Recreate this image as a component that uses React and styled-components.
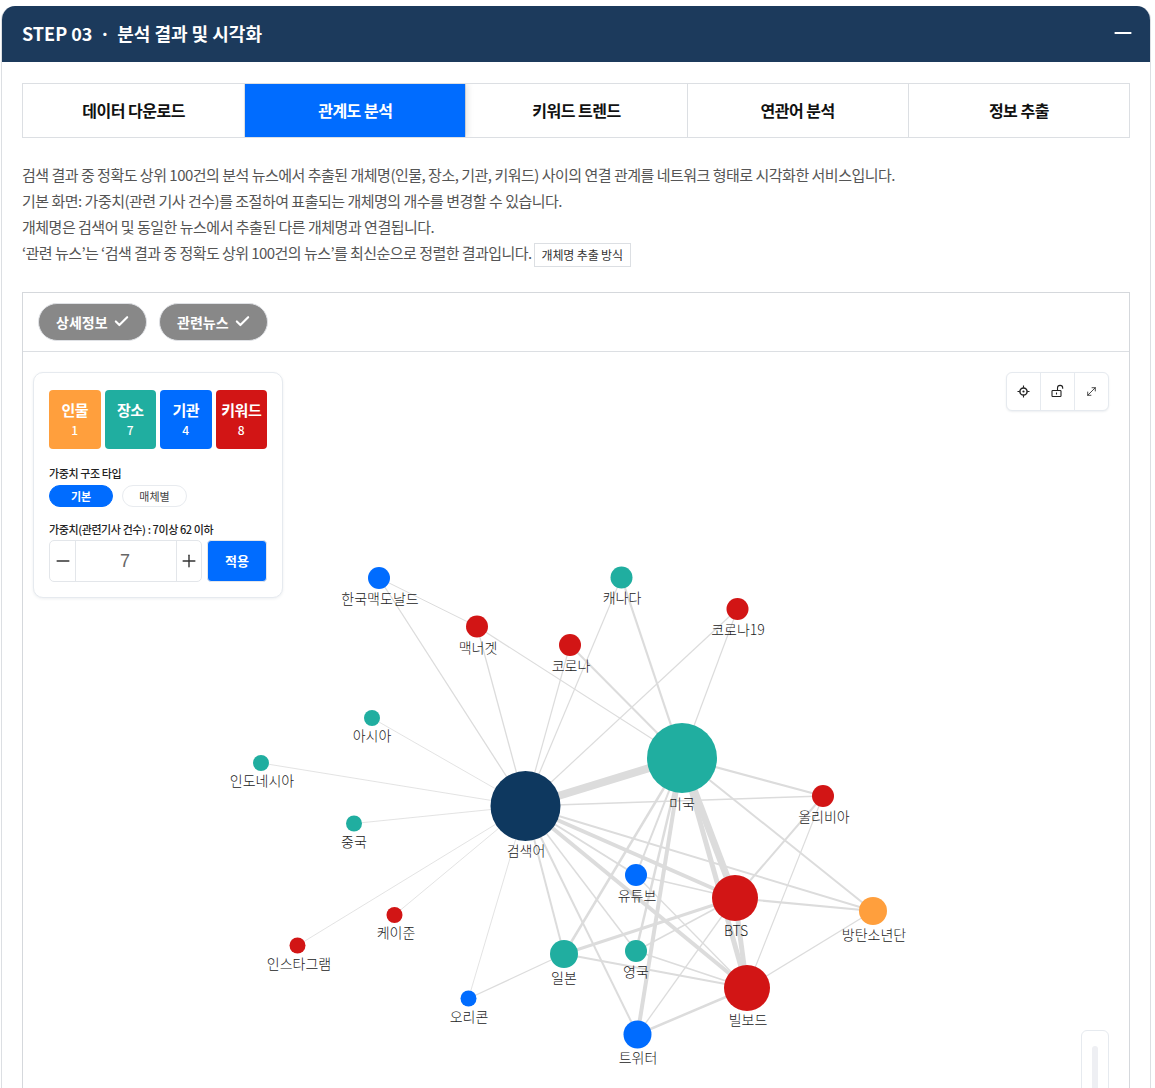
import React from "react";
import styled, { createGlobalStyle } from "styled-components";
import { Check, Minus, MoveDiagonal, Plus } from "lucide-react";

const GlobalStyle = createGlobalStyle`
  html, body, #root {
    margin: 0;
    height: 1088px;
    overflow: hidden;
    background: #fff;
  }
  * { box-sizing: border-box; }
  body {
    font-family: "Noto Sans CJK KR", "Noto Sans", sans-serif;
    color: #333;
  }
`;

const COLORS = {
  person: "#ff9f3d",
  place: "#20aea0",
  org: "#006cff",
  keyword: "#d21515",
  root: "#0e385f",
};

const Section = styled.section`
  margin: 6px 4px 0 1px;
  height: 1082px;
  overflow: hidden;
  border: 1px solid #dcdfe3;
  border-top: none;
  border-bottom: none;
  border-radius: 14px 14px 0 0;
`;

const Header = styled.header`
  display: flex;
  align-items: center;
  justify-content: space-between;
  height: 56px;
  padding: 0 14px 2px 20px;
  background: #1c3a5c;
  color: #fff;
`;

const HeaderTitle = styled.h2`
  margin: 0;
  font-size: 18px;
  font-weight: 700;
`;

const Body = styled.div`
  padding: 21px 20px 0;
`;

const Tabs = styled.nav`
  display: grid;
  grid-template-columns: repeat(5, 1fr);
  height: 55px;
  border: 1px solid #dcdfe3;
  overflow: hidden;
`;

const Tab = styled.button`
  position: relative;
  z-index: ${(p) => (p.$active ? 1 : 0)};
  padding: 0 0 2px;
  border: none;
  border-left: 1px solid #dcdfe3;
  background: ${(p) => (p.$active ? "#006cff" : "#fff")};
  box-shadow: ${(p) => (p.$active ? "3px 0 6px rgba(0, 0, 0, 0.1)" : "none")};
  color: ${(p) => (p.$active ? "#fff" : "#111")};
  font: 700 16px "Noto Sans CJK KR", sans-serif;
  letter-spacing: -0.5px;
  &:first-child { border-left: none; }
`;

const Guide = styled.div`
  margin-top: 24px;
  font-size: 15px;
  line-height: 26px;
  color: #555;
  letter-spacing: -0.5px;
`;

const GuideLine = styled.p`
  margin: 0;
  letter-spacing: ${(p) => (p.$tight ? "-0.55px" : "inherit")};
`;

const MethodButton = styled.button`
  height: 24px;
  margin-left: 2px;
  padding: 0 7px;
  border: 1px solid #dcdfe3;
  background: #fff;
  color: #333;
  font: 400 12px "Noto Sans CJK KR", sans-serif;
  letter-spacing: -0.15px;
  vertical-align: middle;
`;

const Viewer = styled.div`
  margin-top: 25px;
  border: 1px solid #d5d8dc;
  border-bottom: none;
`;

const FilterBar = styled.div`
  display: flex;
  gap: 12px;
  height: 59px;
  padding: 10px 15px 0;
  border-bottom: 1px solid #dcdfe3;
`;

const FilterPill = styled.button`
  display: inline-flex;
  align-items: center;
  gap: 5px;
  width: 109px;
  height: 38px;
  padding: 0 0 0 17px;
  border: 1px solid #dfe1e5;
  border-radius: 19px;
  background: #888;
  color: #fff;
  font: 700 14px "Noto Sans CJK KR", sans-serif;
  white-space: nowrap;
`;

const Canvas = styled.div`
  position: relative;
  height: 736px;
`;

const Graph = styled.svg`
  display: block;
`;

const NodeLabel = styled.text`
  font-family: "Noto Sans CJK KR", sans-serif;
  font-size: 14px;
  font-weight: 300;
  fill: #222;
  text-anchor: middle;
`;

const ControlCard = styled.div`
  position: absolute;
  left: 10px;
  top: 20px;
  width: 250px;
  height: 226px;
  padding: 17px 15px 0;
  background: #fff;
  border: 1px solid #e6eaef;
  border-radius: 10px;
  box-shadow: 0 1px 3px rgba(30, 50, 80, 0.08);
`;

const Legend = styled.div`
  display: grid;
  grid-template-columns: repeat(4, 1fr);
  gap: 4px;
  width: 218px;
`;

const LegendTile = styled.div`
  display: flex;
  flex-direction: column;
  align-items: center;
  justify-content: center;
  height: 59px;
  padding-bottom: 1px;
  border-radius: 4px;
  background: ${(p) => p.$color};
  color: #fff;
`;

const LegendName = styled.span`
  font-size: 15px;
  font-weight: 700;
  line-height: 20px;
  letter-spacing: -0.5px;
  white-space: nowrap;
`;

const LegendCount = styled.span`
  margin-top: 2px;
  font-size: 12px;
  font-weight: 500;
  line-height: 16px;
`;

const FieldLabel = styled.div`
  margin-top: ${(p) => p.$top}px;
  font-size: 11px;
  font-weight: 500;
  line-height: 16px;
  letter-spacing: -0.4px;
  color: #222;
`;

const TypeRow = styled.div`
  display: flex;
  gap: 9px;
  margin-top: 4px;
`;

const TypeButton = styled.button`
  width: ${(p) => p.$width}px;
  height: 22px;
  padding: 0;
  border-radius: 11px;
  border: 1px solid ${(p) => (p.$active ? "#006cff" : "#e8ebef")};
  background: ${(p) => (p.$active ? "#006cff" : "#fff")};
  color: ${(p) => (p.$active ? "#fff" : "#444")};
  font: ${(p) => (p.$active ? 700 : 400)} 11px "Noto Sans CJK KR", sans-serif;
`;

const WeightRow = styled.div`
  display: flex;
  gap: 5px;
  margin-top: 3px;
`;

const Stepper = styled.div`
  display: grid;
  grid-template-columns: 25px 1fr 24px;
  width: 153px;
  height: 42px;
  border: 1px solid #e3e6ea;
  border-radius: 5px;
`;

const StepButton = styled.button`
  display: flex;
  align-items: center;
  justify-content: center;
  padding: 0;
  border: none;
  background: transparent;
  color: #333;
`;

const StepValue = styled.div`
  display: flex;
  align-items: center;
  justify-content: center;
  padding: 2px 2px 0 0;
  border-left: 1px solid #e3e6ea;
  border-right: 1px solid #e3e6ea;
  font-family: "Liberation Sans", sans-serif;
  font-size: 18px;
  color: #666;
`;

const ApplyButton = styled.button`
  width: 60px;
  height: 42px;
  border: 1px solid #e3e6ea;
  border-radius: 4px;
  background: #006cff;
  color: #fff;
  font: 700 13px "Noto Sans CJK KR", sans-serif;
`;

const ToolBox = styled.div`
  position: absolute;
  top: 20px;
  right: 20px;
  display: flex;
  height: 39px;
  background: #fff;
  border: 1px solid #e6eaef;
  border-radius: 6px;
  box-shadow: 0 1px 2px rgba(30, 50, 80, 0.08);
`;

const ToolButton = styled.button`
  display: flex;
  align-items: center;
  justify-content: center;
  width: 34px;
  padding: 0;
  border: none;
  border-left: 1px solid #e6eaef;
  background: transparent;
  color: #222;
  &:first-child { border-left: none; width: 33px; }
`;

const ZoomRail = styled.div`
  position: absolute;
  top: 678px;
  right: 20px;
  width: 28px;
  height: 120px;
  padding-top: 15px;
  border: 1px solid #e6eaef;
  border-radius: 6px;
`;

const ZoomTrack = styled.div`
  width: 6px;
  height: 100px;
  margin: 0 auto;
  border-radius: 3px;
  background: #eeeff3;
`;

const NODES = {
  root: { x: 525.5, y: 806, r: 35, c: "root", label: "검색어", lx: 526, ly: 850 },
  usa: { x: 682, y: 758, r: 35, c: "place", label: "미국", lx: 682, ly: 803 },
  bts: { x: 735, y: 898, r: 23, c: "keyword", label: "BTS", lx: 736, ly: 930 },
  billboard: { x: 747, y: 988, r: 23, c: "keyword", label: "빌보드", lx: 748, ly: 1019 },
  twitter: { x: 637.5, y: 1034.5, r: 14, c: "org", label: "트위터", lx: 638, ly: 1057 },
  uk: { x: 636, y: 951, r: 11, c: "place", label: "영국", lx: 636, ly: 971 },
  japan: { x: 564, y: 954, r: 14, c: "place", label: "일본", lx: 564, ly: 977 },
  youtube: { x: 636, y: 875, r: 11, c: "org", label: "유튜브", lx: 637, ly: 895 },
  olympic: { x: 823, y: 796, r: 11, c: "keyword", label: "올리비아", lx: 824, ly: 816 },
  bangtan: { x: 873, y: 911, r: 14, c: "person", label: "방탄소년단", lx: 874, ly: 934 },
  mcd: { x: 379, y: 578, r: 11, c: "org", label: "한국맥도날드", lx: 380, ly: 598 },
  canada: { x: 621.5, y: 577.5, r: 11, c: "place", label: "캐나다", lx: 622, ly: 597 },
  covid19: { x: 737.5, y: 609, r: 11, c: "keyword", label: "코로나19", lx: 738, ly: 629 },
  nugget: { x: 477, y: 626.5, r: 11, c: "keyword", label: "맥너겟", lx: 478, ly: 647 },
  covid: { x: 570, y: 645, r: 11, c: "keyword", label: "코로나", lx: 571, ly: 665 },
  asia: { x: 372, y: 718, r: 8, c: "place", label: "아시아", lx: 372, ly: 735 },
  indonesia: { x: 261, y: 763, r: 8, c: "place", label: "인도네시아", lx: 262, ly: 780 },
  china: { x: 354, y: 823.5, r: 8, c: "place", label: "중국", lx: 354, ly: 841 },
  cajun: { x: 394.5, y: 915, r: 8, c: "keyword", label: "케이준", lx: 396, ly: 932 },
  insta: { x: 297.5, y: 945.5, r: 8, c: "keyword", label: "인스타그램", lx: 299, ly: 963 },
  oricon: { x: 468.5, y: 998.5, r: 8, c: "org", label: "오리콘", lx: 469, ly: 1016 },
};

const EDGES = [
  ["root", "usa", 8],
  ["root", "mcd", 1.3],
  ["root", "nugget", 1.3],
  ["root", "covid", 1.2],
  ["root", "canada", 1.2],
  ["root", "covid19", 1.2],
  ["root", "asia", 0.8],
  ["root", "indonesia", 0.8],
  ["root", "china", 0.8],
  ["root", "insta", 0.8],
  ["root", "cajun", 0.8],
  ["root", "oricon", 0.8],
  ["root", "japan", 2],
  ["root", "twitter", 2],
  ["root", "uk", 1.5],
  ["root", "youtube", 2],
  ["root", "bts", 4],
  ["root", "billboard", 4],
  ["root", "bangtan", 2],
  ["root", "olympic", 1.5],
  ["mcd", "nugget", 1],
  ["nugget", "usa", 1.2],
  ["covid", "usa", 2],
  ["canada", "usa", 2.2],
  ["covid19", "usa", 1.2],
  ["usa", "olympic", 2.2],
  ["usa", "bangtan", 2],
  ["usa", "bts", 7],
  ["usa", "billboard", 5],
  ["usa", "twitter", 4],
  ["usa", "japan", 2.5],
  ["usa", "youtube", 2],
  ["usa", "uk", 2.5],
  ["bts", "japan", 3],
  ["bts", "olympic", 2],
  ["bts", "bangtan", 2.2],
  ["bts", "billboard", 5],
  ["bts", "youtube", 1.5],
  ["bts", "uk", 1.5],
  ["bts", "twitter", 1.3],
  ["billboard", "japan", 2],
  ["billboard", "uk", 1.5],
  ["billboard", "twitter", 2.5],
  ["billboard", "youtube", 1.3],
  ["billboard", "olympic", 1.2],
  ["billboard", "bangtan", 1.3],
  ["japan", "oricon", 1.3],
];

const TABS = ["데이터 다운로드", "관계도 분석", "키워드 트렌드", "연관어 분석", "정보 추출"];

const LEGEND = [
  { name: "인물", count: 1, color: COLORS.person },
  { name: "장소", count: 7, color: COLORS.place },
  { name: "기관", count: 4, color: COLORS.org },
  { name: "키워드", count: 8, color: COLORS.keyword },
];

const CenterIcon = () => (
  <svg width="13" height="13" viewBox="0 0 13 13" fill="none" stroke="#222">
    <circle cx="6.5" cy="6.5" r="3.6" strokeWidth="1.5" />
    <circle cx="6.5" cy="6.5" r="1.1" fill="#222" stroke="none" />
    <path d="M6.5 0.5v2.2M6.5 10.3v2.2M0.5 6.5h2.2M10.3 6.5h2.2" strokeWidth="1.1" />
  </svg>
);

const UnlockIcon = () => (
  <svg width="14" height="14" viewBox="0 0 14 14" fill="none" stroke="#222" strokeWidth="1.1">
    <rect x="1" y="6.5" width="9" height="6" rx="0.8" />
    <path d="M5.5 8.5v2" />
    <path d="M6.5 6.5V4a2.6 2.6 0 0 1 5.2 0v.8" />
  </svg>
);

const NetworkGraph = () => (
  <Graph width="1106" height="736" viewBox="23 352 1106 736">
    {EDGES.map(([a, b, w]) => (
      <line
        key={a + b}
        x1={NODES[a].x}
        y1={NODES[a].y}
        x2={NODES[b].x}
        y2={NODES[b].y}
        stroke="#dcdcdc"
        strokeWidth={w}
      />
    ))}
    {Object.entries(NODES).map(([id, n]) => (
      <circle key={id} cx={n.x} cy={n.y} r={n.r} fill={COLORS[n.c]} />
    ))}
    {Object.entries(NODES).map(([id, n]) => (
      <NodeLabel key={id} x={n.lx} y={n.ly + 5.5}>
        {n.label}
      </NodeLabel>
    ))}
  </Graph>
);

export default function App() {
  return (
    <>
      <GlobalStyle />
      <Section>
        <Header>
          <HeaderTitle>STEP 03 ㆍ 분석 결과 및 시각화</HeaderTitle>
          <Minus size={26} strokeWidth={1.9} />
        </Header>
        <Body>
          <Tabs>
            {TABS.map((t) => (
              <Tab key={t} $active={t === "관계도 분석"}>
                {t}
              </Tab>
            ))}
          </Tabs>
          <Guide>
            <GuideLine>
              검색 결과 중 정확도 상위 100건의 분석 뉴스에서 추출된 개체명(인물, 장소, 기관, 키워드) 사이의 연결 관계를 네트워크 형태로 시각화한 서비스입니다.
            </GuideLine>
            <GuideLine>기본 화면: 가중치(관련 기사 건수)를 조절하여 표출되는 개체명의 개수를 변경할 수 있습니다.</GuideLine>
            <GuideLine>개체명은 검색어 및 동일한 뉴스에서 추출된 다른 개체명과 연결됩니다.</GuideLine>
            <GuideLine $tight>
              ‘관련 뉴스’는 ‘검색 결과 중 정확도 상위 100건의 뉴스’를 최신순으로 정렬한 결과입니다.
              <MethodButton>개체명 추출 방식</MethodButton>
            </GuideLine>
          </Guide>
          <Viewer>
            <FilterBar>
              <FilterPill>
                상세정보 <Check size={17} strokeWidth={3} />
              </FilterPill>
              <FilterPill>
                관련뉴스 <Check size={17} strokeWidth={3} />
              </FilterPill>
            </FilterBar>
            <Canvas>
              <NetworkGraph />
              <ControlCard>
                <Legend>
                  {LEGEND.map((l) => (
                    <LegendTile key={l.name} $color={l.color}>
                      <LegendName>{l.name}</LegendName>
                      <LegendCount>{l.count}</LegendCount>
                    </LegendTile>
                  ))}
                </Legend>
                <FieldLabel $top={16}>가중치 구조 타입</FieldLabel>
                <TypeRow>
                  <TypeButton $active $width={64}>기본</TypeButton>
                  <TypeButton $width={65}>매체별</TypeButton>
                </TypeRow>
                <FieldLabel $top={14}>가중치(관련기사 건수) : 7이상 62 이하</FieldLabel>
                <WeightRow>
                  <Stepper>
                    <StepButton><Minus size={20} strokeWidth={1.7} /></StepButton>
                    <StepValue>7</StepValue>
                    <StepButton><Plus size={20} strokeWidth={1.7} /></StepButton>
                  </Stepper>
                  <ApplyButton>적용</ApplyButton>
                </WeightRow>
              </ControlCard>
              <ToolBox>
                <ToolButton><CenterIcon /></ToolButton>
                <ToolButton><UnlockIcon /></ToolButton>
                <ToolButton><MoveDiagonal size={13} strokeWidth={1.5} /></ToolButton>
              </ToolBox>
              <ZoomRail>
                <ZoomTrack />
              </ZoomRail>
            </Canvas>
          </Viewer>
        </Body>
      </Section>
    </>
  );
}
